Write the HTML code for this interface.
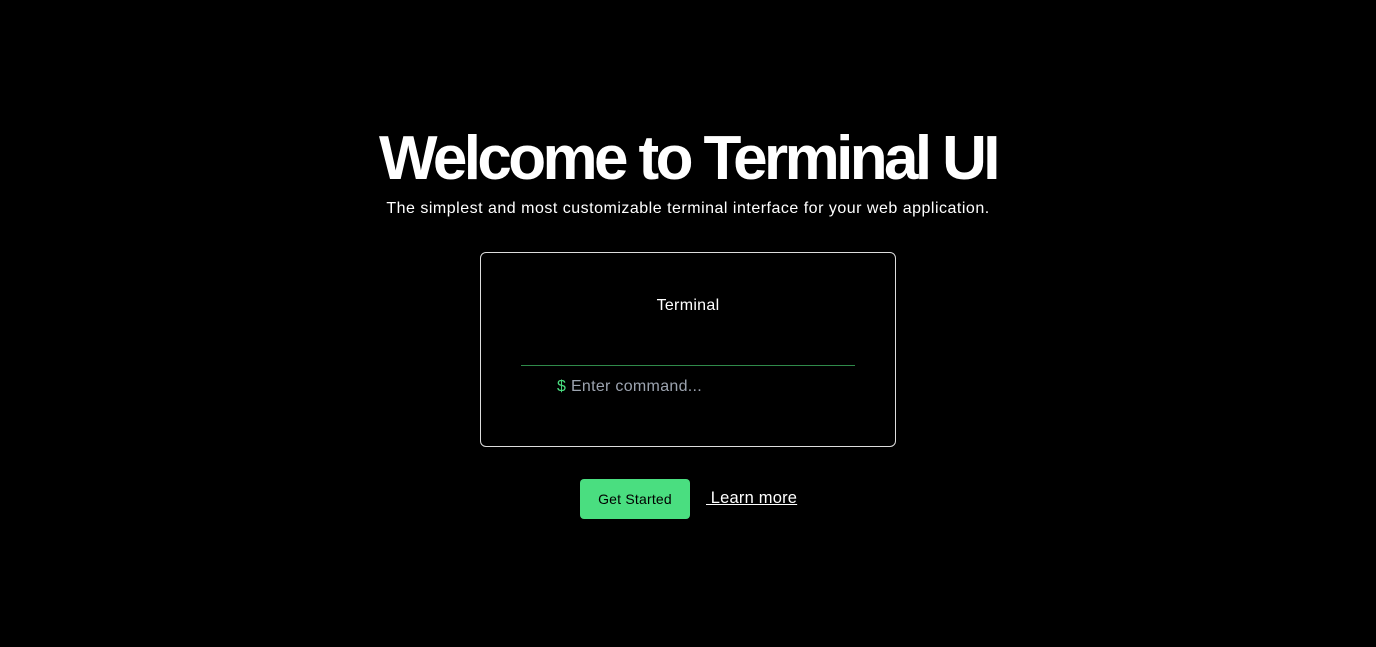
<!DOCTYPE html>
<html><head><meta charset="utf-8"><style>
html,body{margin:0;padding:0;background:#000;width:1376px;height:647px;overflow:hidden;font-family:"Liberation Sans",sans-serif;color:#fff}
h1{position:absolute;left:0;width:1376px;top:123px;margin:0;text-align:center;font-size:62px;font-weight:700;letter-spacing:-3.6px;line-height:72px}
.sub{position:absolute;left:0;width:1376px;top:199px;text-align:center;font-size:16px;line-height:20px;letter-spacing:0.5px}
.box{position:absolute;left:480px;top:252px;width:414px;height:193px;border:1px solid #ddd;border-radius:6px}
.title{position:absolute;left:0;width:414px;top:44px;text-align:center;font-size:16px;letter-spacing:0.3px}
.line{position:absolute;left:40px;width:334px;top:112px;height:1px;background:#2f8a4a}
.cmd{position:absolute;left:76px;top:125px;font-size:16px;color:#9ca3af;letter-spacing:0.3px}
.cmd span{color:#4ade80}
.btn{position:absolute;left:580px;top:479px;width:110px;height:40px;background:#4ade80;border-radius:4px;color:#000;font-size:14px;line-height:40px;text-align:center;letter-spacing:0.2px}
.lm{position:absolute;left:706px;top:488px;font-size:16.5px;text-decoration:underline;line-height:20px;letter-spacing:0.2px}
</style></head><body>
<h1>Welcome to Terminal UI</h1>
<div class="sub">The simplest and most customizable terminal interface for your web application.</div>
<div class="box">
<div class="title">Terminal</div>
<div class="line"></div>
<div class="cmd"><span>$</span> Enter command...</div>
</div>
<div class="btn">Get Started</div>
<div class="lm">&nbsp;Learn more</div>
</body></html>
